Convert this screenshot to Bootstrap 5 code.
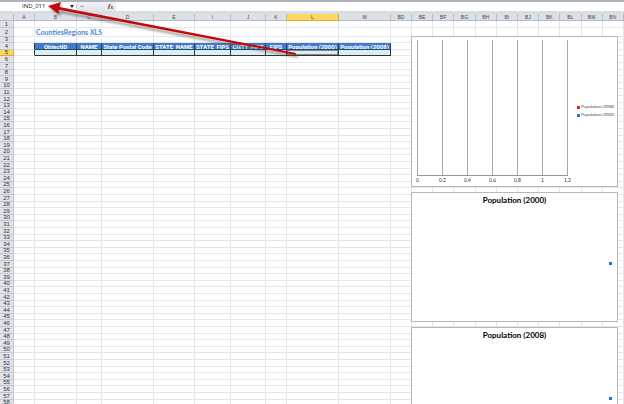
<!DOCTYPE html>
<html lang="en">
<head>
<meta charset="utf-8">
<meta name="viewport" content="width=device-width, initial-scale=1">
<title>CountiesRegions XLS</title>
<link href="https://cdn.jsdelivr.net/npm/bootstrap@5.3.0/dist/css/bootstrap.min.css" rel="stylesheet">
<style>
body{font-family:"Liberation Sans",Arial,sans-serif;font-size:6px;line-height:6px;color:#333;background:#fff}
.formula-bar{border-top:2px solid #adb2b7;background:#fff;height:14px;border-bottom:3px solid #d9dde2}
.formula-bar input{border:0;outline:0;background:transparent;min-width:0;height:9px}
.name-box{width:68px;font:6px/9px "Open Sans",sans-serif;color:#111;padding:0 0 0 22px}
.formula-bar button{border:0;background:transparent;padding:0}
.drop-btn{width:8px;line-height:0}
.fx-zone{width:40px;height:9px;background:linear-gradient(#f3f4f6,#dfe3e8);border-left:1px solid #b5bac0;border-radius:5px 0 0 5px;padding-right:3px}
.formula-bar .fx-btn{font:italic 700 7px/9px "Liberation Serif",serif;color:#333}
.sheet{table-layout:fixed;width:100%;border-collapse:separate;border-spacing:0}
.sheet th,.sheet td{padding:0;border:0 solid #e4e6e9;border-width:0 1px 1px 0;font-weight:400;white-space:nowrap;line-height:5px;text-align:center;vertical-align:middle}
.sheet thead tr{height:7px}
.sheet thead th,.sheet .corner{background:#dce1e8;border-color:#b4bbc4;color:#444;font-size:5px}
.sheet tbody th{background:#dfe4ea;border-color:#bfc6ce;color:#333;font-size:6px}
.sheet tbody tr{height:7px}
.sheet tbody tr:nth-child(5n+3),.sheet tbody tr:nth-child(5n){height:6px}
.sheet tbody tr.tall{height:9px}
.sheet .picked{background:#ffd75e;border-color:#dba93a}
.sheet .sheet-title{font:700 7px/8px Lato,sans-serif;color:#4b87d2;text-align:left;border-right-color:transparent;padding-left:1px}
.sheet .field{background:#3f7ccb;color:#fff;font-family:Roboto,sans-serif;font-weight:700;border-color:#26436a;overflow:hidden}
.sheet .value{background:#daeff4;border-color:#333}
.sheet .edge{border-right-color:#333}
.sheet .active-cell{box-shadow:inset 0 0 0 1px #85898c}
.charts{position:absolute;top:36px;left:411px;right:6px;gap:5px}
.chart{background:#fff;border:1px solid #b8b8b8}
.chart-bars{height:151px;padding:3px 3px 0 5px}
.chart-dots{height:130px}
.chart h2{font:700 8px/10px Lato,sans-serif;color:#000;padding-top:2px}
.plot{width:151px;height:136px;border-bottom:1px solid #999}
.plot span{width:1px;background:#a8a8a8}
.plot-ticks{margin:2px 0 0 -7px;width:165px;font:5px/5px Lato,sans-serif}
.plot-ticks span{width:15px}
.plot-legend{font:4px/8px "Open Sans",sans-serif;color:#222;padding-bottom:4px}
.swatch{width:3px;height:3px;margin-right:1px}
.red{background:#d02a2a}
.blue{background:#2f74c4}
.dot{width:3px;height:3px;margin:57px 5px 0 auto}
.arrow{position:absolute;left:0;top:0;pointer-events:none}
</style>
<script src="https://cdn.jsdelivr.net/npm/bootstrap@5.3.0/dist/js/bootstrap.bundle.min.js"></script>
</head>
<body class="vh-100 overflow-hidden position-relative">
<div class="formula-bar d-flex align-items-center">
<input class="name-box" aria-label="Name box" value="IND_011">
<button class="drop-btn" aria-label="Named ranges"><svg width="4" height="3" viewBox="0 0 4 3"><path d="M0 0h4L2 3z" fill="#222"/></svg></button>
<div class="fx-zone d-flex align-items-center justify-content-between">
<svg width="8" height="5" viewBox="0 0 8 5"><path d="M3 2.5q1.500-1 4 0" stroke="#a3a8ae" fill="none"/></svg>
<button class="fx-btn" aria-label="Insert function"><i>f</i><sub>x</sub></button>
</div>
<input class="flex-grow-1" aria-label="Formula">
</div>
<table class="sheet" aria-label="Counties regions">
<colgroup id="cols"></colgroup>
<thead><tr id="letters"></tr></thead>
<tbody id="rows"></tbody>
</table>
<div class="charts d-flex flex-column">
<section class="chart chart-bars d-flex justify-content-between" aria-label="Population by year">
<div>
<div class="plot d-flex justify-content-between"><span></span><span></span><span></span><span></span><span></span><span></span><span></span></div>
<div class="plot-ticks d-flex justify-content-between text-center"><span>0</span><span>0.2</span><span>0.4</span><span>0.6</span><span>0.8</span><span>1</span><span>1.2</span></div>
</div>
<div class="plot-legend align-self-center">
<div class="d-flex align-items-center"><span class="swatch red"></span>Population (2008)</div>
<div class="d-flex align-items-center"><span class="swatch blue"></span>Population (2000)</div>
</div>
</section>
<section class="chart chart-dots"><h2 class="text-center m-0">Population (2000)</h2><div class="dot blue"></div></section>
<section class="chart chart-dots"><h2 class="text-center m-0">Population (2008)</h2><div class="dot blue"></div></section>
</div>
<svg class="arrow" width="320" height="64" viewBox="0 0 320 64" aria-hidden="true">
<defs><filter id="soft" x="-5%" y="-20%" width="110%" height="150%"><feGaussianBlur stdDeviation="1.200"/></filter></defs>
<g transform="translate(2 3)" fill="#555" opacity=".55" filter="url(#soft)"><path d="M48 6L60 2L58.500 7.500L296 53L295.500 55L58 10L59 14z"/></g>
<path d="M48 6L61 2L59.500 7L296 53L295.500 55L58.800 9.800L58.500 14z" fill="#c4090d"/>
</svg>
<script>
const columns = [["A",21],["B",42],["C",25],["D",52],["E",41],["I",36],["J",35],["K",21],["L",52],["M",52],["BD",21],
  ["BE"],["BF"],["BG"],["BH"],["BI"],["BJ"],["BK"],["BL"],["BM"],["BN"]];
const fields = ["ObjectID","NAME","State Postal Code","STATE_NAME","STATE_FIPS","CNTY_FIPS","FIPS","Population (2000)","Population (2008)"];
const add = (parent, tag, text = "", cls = "") => {
  const el = document.createElement(tag);
  el.textContent = text;
  if (cls) el.className = cls;
  return parent.appendChild(el);
};
const cols = document.getElementById("cols");
add(cols, "col").style.width = "14px";
const letters = document.getElementById("letters");
add(letters, "td", "", "corner");
columns.forEach(([name, width]) => {
  const col = add(cols, "col");
  if (width) col.style.width = width + "px";
  add(letters, "th", name, name === "L" ? "picked" : "").scope = "col";
});
const rows = document.getElementById("rows");
for (let n = 1; n <= 58; n++) {
  const tr = add(rows, "tr", "", n === 2 ? "tall" : "");
  add(tr, "th", n, n === 5 ? "picked" : "").scope = "row";
  columns.forEach(([name], i) => {
    const inTable = i > 0 && i <= fields.length;
    if (n === 2 && i === 2) return;
    if (n === 2 && i === 1) add(tr, "td", "CountiesRegions XLS", "sheet-title").colSpan = 2;
    else if (n === 4 && inTable) add(tr, "td", fields[i - 1], "field");
    else if (n === 5 && inTable) add(tr, "td", "", name === "L" ? "value active-cell" : "value");
    else add(tr, "td", "", i === 0 && (n === 4 || n === 5) ? "edge" : "");
  });
}
</script>
</body>
</html>
